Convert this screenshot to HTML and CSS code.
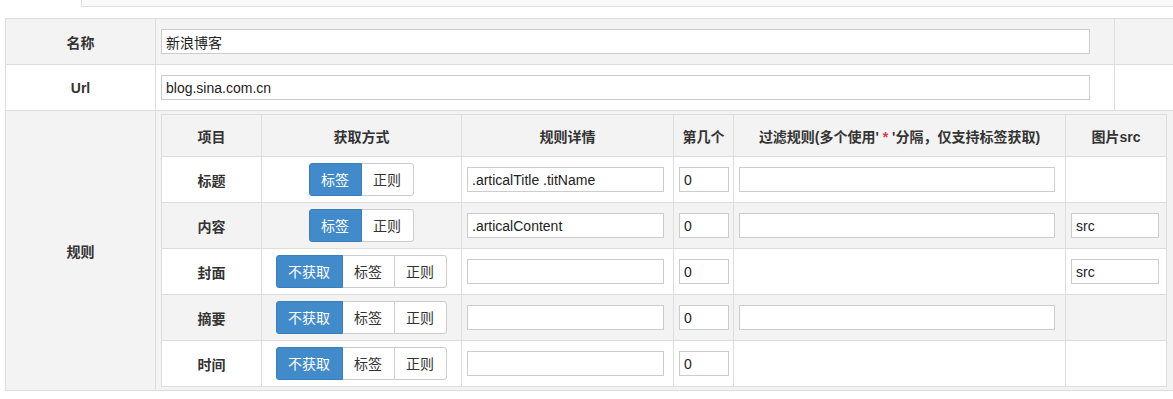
FILE: index.html
```html
<!DOCTYPE html>
<html>
<head>
<meta charset="utf-8">
<link rel="stylesheet" href="styles.css">
</head>
<body>
<div class="topbox"></div>
<div class="page">
<table class="form">
  <colgroup><col class="c1"><col class="c2"><col class="c3"></colgroup>
  <tr class="gray">
    <td class="label">名称</td>
    <td class="field"><input class="wide" type="text" value="新浪博客"></td>
    <td></td>
  </tr>
  <tr>
    <td class="label">Url</td>
    <td class="field"><input class="wide" type="text" value="blog.sina.com.cn"></td>
    <td></td>
  </tr>
  <tr class="gray">
    <td class="label">规则</td>
    <td class="rules" colspan="2">
      <table class="inner">
        <colgroup><col class="i1"><col class="i2"><col class="i3"><col class="i4"><col class="i5"><col class="i6"></colgroup>
        <tr class="gray head">
          <th>项目</th><th>获取方式</th><th>规则详情</th><th>第几个</th>
          <th>过滤规则(多个使用' <span class="star">*</span> '分隔，仅支持标签获取)</th><th>图片src</th>
        </tr>
        <tr>
          <td class="name">标题</td>
          <td class="mode"><div class="btns"><span class="btn on">标签</span><span class="btn">正则</span></div></td>
          <td><input class="w3" type="text" value=".articalTitle .titName"></td>
          <td><input class="w4" type="text" value="0"></td>
          <td><input class="w5" type="text" value=""></td>
          <td></td>
        </tr>
        <tr class="gray">
          <td class="name">内容</td>
          <td class="mode"><div class="btns"><span class="btn on">标签</span><span class="btn">正则</span></div></td>
          <td><input class="w3" type="text" value=".articalContent"></td>
          <td><input class="w4" type="text" value="0"></td>
          <td><input class="w5" type="text" value=""></td>
          <td><input class="w6" type="text" value="src"></td>
        </tr>
        <tr>
          <td class="name">封面</td>
          <td class="mode"><div class="btns"><span class="btn on">不获取</span><span class="btn">标签</span><span class="btn">正则</span></div></td>
          <td><input class="w3" type="text" value=""></td>
          <td><input class="w4" type="text" value="0"></td>
          <td></td>
          <td><input class="w6" type="text" value="src"></td>
        </tr>
        <tr class="gray">
          <td class="name">摘要</td>
          <td class="mode"><div class="btns"><span class="btn on">不获取</span><span class="btn">标签</span><span class="btn">正则</span></div></td>
          <td><input class="w3" type="text" value=""></td>
          <td><input class="w4" type="text" value="0"></td>
          <td><input class="w5" type="text" value=""></td>
          <td></td>
        </tr>
        <tr>
          <td class="name">时间</td>
          <td class="mode"><div class="btns"><span class="btn on">不获取</span><span class="btn">标签</span><span class="btn">正则</span></div></td>
          <td><input class="w3" type="text" value=""></td>
          <td><input class="w4" type="text" value="0"></td>
          <td></td>
          <td></td>
        </tr>
      </table>
    </td>
  </tr>
</table>
</div>
</body>
</html>
```
FILE: styles.css
```css
html, body {
  margin: 0;
  padding: 0;
  background: #fff;
}
body {
  font-family: "Liberation Sans", "Noto Sans CJK SC", Arial, sans-serif;
  font-size: 14px;
  color: #333;
}
.topbox {
  margin-left: 81px;
  height: 6px;
  background: #f9f9f9;
  border-left: 1px solid #ddd;
  border-bottom: 1px solid #ddd;
}
.page {
  padding: 11px 0 0 5px;
}
table {
  border-collapse: collapse;
  table-layout: fixed;
}
.form {
  width: 1168px;
}
.form col.c1 { width: 150px; }
.form col.c2 { width: 959px; }
.form col.c3 { width: 59px; }
.form > tbody > tr > td,
.form > tr > td {
  border: 1px solid #ddd;
  height: 45px;
  padding: 0 5px;
  vertical-align: middle;
}
.gray { background: #f2f2f2; }
.form tr.gray { background: #f3f3f3; }
.form tr:not(.gray) { background: #fff; }
.label {
  text-align: center;
  font-weight: bold;
}
.form td.rules {
  padding: 3px 5px;
  height: auto;
}
input {
  box-sizing: border-box;
  height: 25px;
  border: 1px solid #ccc;
  padding: 0 4px;
  margin: 0;
  font-family: "Liberation Sans", "Noto Sans CJK SC", Arial, sans-serif;
  font-size: 14px;
  color: #222;
  background: #fff;
  display: block;
  outline: none;
}
input.wide { width: 929px; }
.inner {
  width: 1005px;
}
.inner col.i1 { width: 100px; }
.inner col.i2 { width: 200px; }
.inner col.i3 { width: 212px; }
.inner col.i4 { width: 60px; }
.inner col.i5 { width: 332px; }
.inner col.i6 { width: 101px; }
.inner th, .inner td {
  border: 1px solid #ddd;
  height: 45px;
  padding: 0 5px;
  vertical-align: middle;
}
.inner th {
  height: 41px;
  font-weight: bold;
  text-align: center;
  white-space: nowrap;
  padding: 0;
}
.star { color: #e4393c; }
.inner td.name {
  text-align: center;
  font-weight: bold;
}
.inner td.mode {
  text-align: center;
}
.btns {
  display: inline-flex;
  vertical-align: middle;
}
.btn {
  display: block;
  box-sizing: border-box;
  height: 33px;
  line-height: 31px;
  padding: 0 12px 0 11px;
  border: 1px solid #ccc;
  background: #fff;
  color: #333;
  font-family: "Noto Sans CJK SC", "Liberation Sans", sans-serif;
  font-size: 14px;
}
.btn + .btn { margin-left: -1px; }
.btn:first-child { border-radius: 3px 0 0 3px; }
.btn:last-child { border-radius: 0 3px 3px 0; }
.btn.on {
  background: #428bca;
  border-color: #3a7fbd;
  color: #fff;
  position: relative;
}
input.w3 { width: 197px; }
input.w4 { width: 50px; }
input.w5 { width: 316px; }
input.w6 { width: 88px; }
```
